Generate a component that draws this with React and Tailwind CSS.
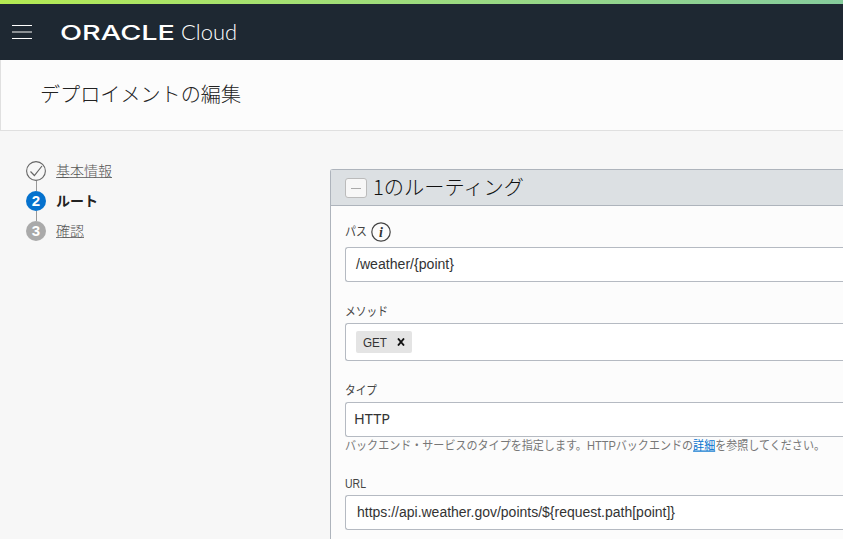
import React from "react";

const steps = [
  { label: "基本情報", state: "done", width: 56 },
  { label: "ルート", state: "current", number: 2, width: 42 },
  { label: "確認", state: "todo", number: 3, width: 28 },
];

// Text run condensed or expanded to a given width, drawn on a fixed baseline.
function Run({ children, width, size, height, baseline, className = "", weight = 400 }) {
  return (
    <svg width={width} height={height} className={`block shrink-0 overflow-visible fill-current ${className}`}>
      <text
        x="0"
        y={baseline}
        fontSize={size}
        fontWeight={weight}
        textLength={width}
        lengthAdjust="spacingAndGlyphs"
      >
        {children}
      </text>
    </svg>
  );
}

function Header() {
  return (
    <header>
      <div className="h-1 bg-gradient-to-r from-[#b4ea52] to-[#86cc9c]" />
      <div className="flex h-14 items-center bg-[#1e2832] pl-3">
        <div className="flex w-5 flex-col gap-[5px]">
          <span className="h-px bg-white" />
          <span className="h-0.5 bg-[#8b9094]" />
          <span className="h-px bg-white" />
        </div>
        <div className="ml-7 flex h-6 items-center text-white">
          <Run width={115} size={20.5} height={24} baseline={20} weight={500} className="font-['Inter']">
            ORACLE
          </Run>
          <Run width={56} size={22} height={24} baseline={20} weight={300} className="ml-1.5 font-['Lato']">
            Cloud
          </Run>
        </div>
      </div>
    </header>
  );
}

function Marker({ step }) {
  if (step.state === "done") {
    return (
      <svg width="20" height="20" viewBox="0 0 20 20" fill="none" stroke="#666" className="block">
        <circle cx="10" cy="10" r="9.4" strokeWidth="1.1" />
        <path d="M4.5 10.5 8.4 14.5 16 5" strokeWidth="1.2" />
      </svg>
    );
  }
  return (
    <span
      className={`flex size-5 items-center justify-center rounded-full pb-0.5 font-['Liberation_Sans'] text-[15px] font-bold leading-none text-white ${
        step.state === "current" ? "bg-[#0572ce]" : "bg-[#aaaaaa]"
      }`}
    >
      {step.number}
    </span>
  );
}

function Steps() {
  return (
    <nav className="w-[330px] shrink-0 pl-[26px] pt-[30px]">
      {steps.map((step, i) => (
        <div key={step.label} className="flex">
          <div className="flex w-5 flex-col items-center">
            <Marker step={step} />
            {i < steps.length - 1 && <span className="h-2.5 w-px bg-[#999]" />}
          </div>
          <div
            className={`ml-2.5 h-[17px] ${
              step.state === "current" ? "text-[#222]" : "border-b border-[#777] text-[#555]"
            }`}
          >
            <Run width={step.width} size={14} height={16} baseline={14.5} weight={step.state === "current" ? 700 : 300}>
              {step.label}
            </Run>
          </div>
        </div>
      ))}
    </nav>
  );
}

function Label({ children, width }) {
  return (
    <div className="h-[41px] pt-5 text-[#444]">
      <Run width={width} size={12} height={18} baseline={14}>
        {children}
      </Run>
    </div>
  );
}

function Field({ children, className = "" }) {
  return (
    <div className={`flex items-center rounded-l-[3px] border border-r-0 border-[#b5bac2] bg-white text-[#333] ${className}`}>
      {children}
    </div>
  );
}

function RoutePanel() {
  return (
    <section className="mt-[38px] h-[400px] grow rounded-tl-[3px] border-l border-t border-[#aeb4bc] bg-[#fcfcfc]">
      <h2 className="flex h-9 items-center border-b border-[#aeb4bc] bg-[#dce0e3] pl-3.5">
        <span className="mt-px flex h-5 w-[22px] items-center justify-center rounded-[3px] border border-[#bbb] bg-[#f7f7f7]">
          <span className="h-px w-2.5 bg-[#aaa]" />
        </span>
        <Run width={151} size={20} height={28} baseline={20.5} weight={300} className="ml-1.5 font-['Noto_Sans_CJK_JP'] text-[#111]">
          1のルーティング
        </Run>
      </h2>
      <div className="pl-3.5">
        <div className="flex h-[41px] pt-4">
          <Run width={22} size={12} height={18} baseline={13.5} className="text-[#444]">
            パス
          </Run>
          <svg width="20" height="20" viewBox="0 0 20 20" fill="none" className="ml-1">
            <circle cx="10" cy="10" r="9.2" stroke="#444" strokeWidth="1.2" />
            <text x="10" y="14.5" textAnchor="middle" fontSize="14" className="fill-[#333] font-['Liberation_Serif'] font-bold italic">
              i
            </text>
          </svg>
        </div>
        <Field className="h-[35px] pl-2.5">
          <Run width={98} size={14} height={20} baseline={14}>
            /weather/&#123;point&#125;
          </Run>
        </Field>
        <Label width={43}>メソッド</Label>
        <Field className="h-[38px] pl-2.5">
          <span className="flex h-[22px] w-14 items-center rounded-[2px] bg-[#e4e4e4] pl-[7px]">
            <Run width={24} size={12} height={18} baseline={13.5} className="text-[#333]">
              GET
            </Run>
            <svg width="8" height="8" viewBox="0 0 8 8" className="ml-2.5" stroke="#111" strokeWidth="1.9">
              <path d="M1 0.5 7 7.5M7 0.5 1 7.5" />
            </svg>
          </span>
        </Field>
        <Label width={32}>タイプ</Label>
        <Field className="h-[35px] pl-2">
          <Run width={36} size={14} height={20} baseline={14} className="font-['Noto_Sans'] text-[#333]">
            HTTP
          </Run>
        </Field>
        <p className="h-[17px] text-[#777]">
          <Run width={480} size={12} height={17} baseline={12.5}>
            バックエンド・サービスのタイプを指定します。HTTPバックエンドの
            <tspan className="fill-[#0572ce] underline">詳細</tspan>
            を参照してください。
          </Run>
        </p>
        <Label width={21}>URL</Label>
        <Field className="h-[35px] pl-[11px]">
          <Run width={318} size={14} height={20} baseline={14}>
            {"https://api.weather.gov/points/${request.path[point]}"}
          </Run>
        </Field>
      </div>
    </section>
  );
}

export default function App() {
  return (
    <div className="h-[539px] w-[843px] overflow-hidden bg-[#f7f7f7] font-['Liberation_Sans','Noto_Sans_CJK_JP',sans-serif]">
      <Header />
      <div className="h-[71px] border-b border-l border-[#e0e0e0] bg-[#fcfcfc] pl-[39px] pt-5 text-[#222]">
        <Run width={201} size={20} height={28} baseline={21.5} weight={300}>
          デプロイメントの編集
        </Run>
      </div>
      <div className="flex">
        <Steps />
        <RoutePanel />
      </div>
    </div>
  );
}
